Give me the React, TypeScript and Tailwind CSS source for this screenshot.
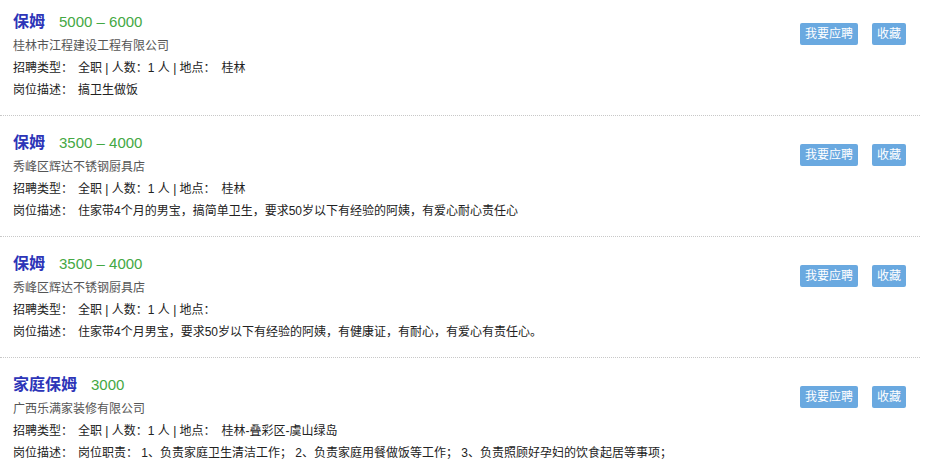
import React from "react";

type JobType = {
  title: string;
  salary: string;
  company: string;
  location: string;
  desc: string;
};

const jobs: JobType[] = [
  {
    title: "保姆",
    salary: "5000 – 6000",
    company: "桂林市江程建设工程有限公司",
    location: "桂林",
    desc: "搞卫生做饭",
  },
  {
    title: "保姆",
    salary: "3500 – 4000",
    company: "秀峰区辉达不锈钢厨具店",
    location: "桂林",
    desc: "住家带4个月的男宝，搞简单卫生，要求50岁以下有经验的阿姨，有爱心耐心责任心",
  },
  {
    title: "保姆",
    salary: "3500 – 4000",
    company: "秀峰区辉达不锈钢厨具店",
    location: "",
    desc: "住家带4个月男宝，要求50岁以下有经验的阿姨，有健康证，有耐心，有爱心有责任心。",
  },
  {
    title: "家庭保姆",
    salary: "3000",
    company: "广西乐满家装修有限公司",
    location: "桂林-叠彩区-虞山绿岛",
    desc: "岗位职责： 1、负责家庭卫生清洁工作； 2、负责家庭用餐做饭等工作； 3、负责照顾好孕妇的饮食起居等事项；",
  },
];

const JobItem: React.FC<{ job: JobType; last: boolean }> = ({ job, last }) => {
  return (
    <div className={`mr-[12px] pl-[13px] pr-[14px] pt-[9px] ${last ? "" : "pb-[14px] mb-[5px] border-b border-dotted border-[#c8c8c8]"}`}>
      <div className="flex flex-row items-start">
        <div className="flex-1">
          <div className="flex flex-row items-center h-[26px]">
            <span className="text-[16px] font-bold text-[#2d35b8]">{job.title}</span>
            <span className="ml-[14px] text-[15px] text-[#44a844]">{job.salary}</span>
          </div>
          <div className="h-[22px] leading-[22px] text-[12px] text-[#555]">{job.company}</div>
          <div className="h-[22px] leading-[22px] text-[12px] text-[#222]">
            招聘类型：<span className="ml-[5px]">全职 | 人数：1 人 | 地点：</span>
            <span className="ml-[6px]">{job.location}</span>
          </div>
          <div className="h-[22px] leading-[22px] text-[12px] text-[#222]">
            岗位描述：<span className="ml-[5px]">{job.desc}</span>
          </div>
        </div>
        <div className="flex flex-row gap-[14px] mt-[14px]">
          <button className="h-[22px] px-[5px] rounded-[2px] bg-[#6aa9e0] text-white text-[12px] leading-[22px]">
            我要应聘
          </button>
          <button className="h-[22px] px-[5px] rounded-[2px] bg-[#6aa9e0] text-white text-[12px] leading-[22px]">
            收藏
          </button>
        </div>
      </div>
    </div>
  );
};

export default function App() {
  return (
    <div
      className="w-[932px] h-[476px] overflow-hidden bg-white"
      style={{ fontFamily: '"Liberation Sans", "Noto Sans CJK SC", sans-serif' }}
    >
      {jobs.map((job, i) => (
        <JobItem key={i} job={job} last={i === jobs.length - 1} />
      ))}
    </div>
  );
}
